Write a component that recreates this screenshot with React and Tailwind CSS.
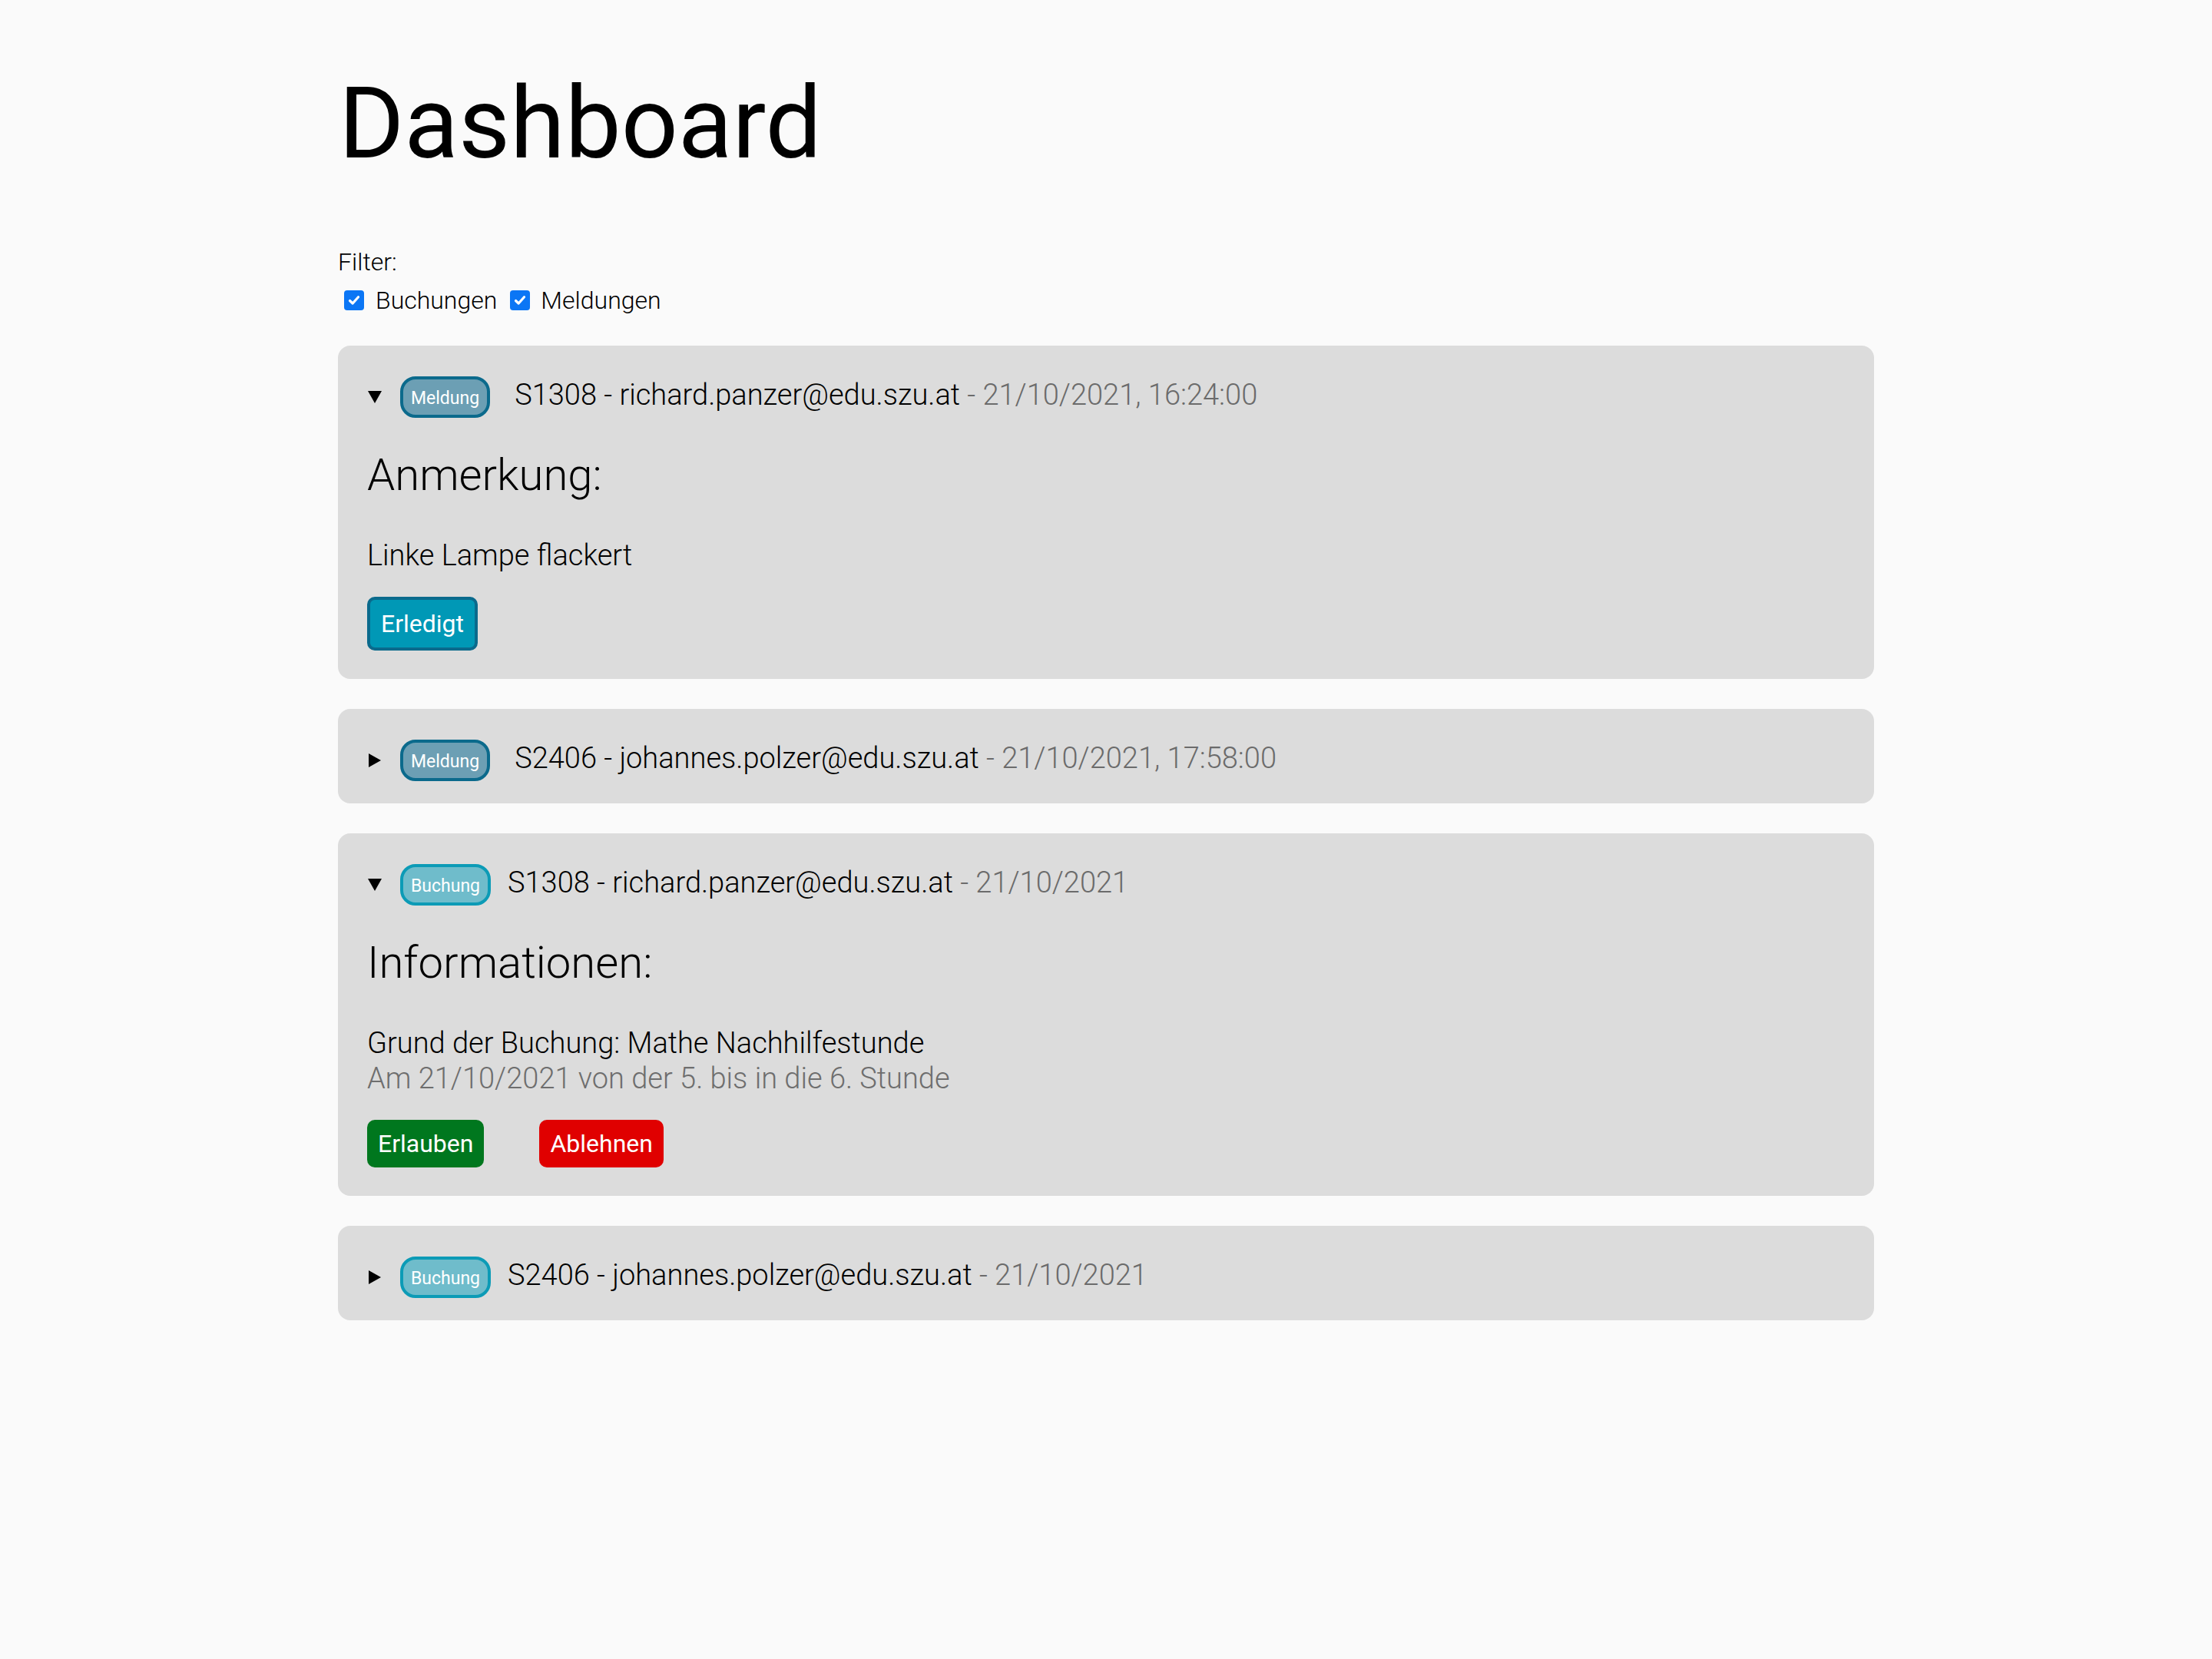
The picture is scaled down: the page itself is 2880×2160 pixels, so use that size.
import React from 'react';

const items = [
  {
    id: 1,
    type: 'Meldung',
    open: true,
    head: 'S1308 - richard.panzer@edu.szu.at',
    date: '21/10/2021, 16:24:00',
    title: 'Anmerkung:',
    lines: ['Linke Lampe flackert'],
    actions: 'meldung',
  },
  {
    id: 2,
    type: 'Meldung',
    open: false,
    head: 'S2406 - johannes.polzer@edu.szu.at',
    date: '21/10/2021, 17:58:00',
  },
  {
    id: 3,
    type: 'Buchung',
    open: true,
    head: 'S1308 - richard.panzer@edu.szu.at',
    date: '21/10/2021',
    title: 'Informationen:',
    lines: ['Grund der Buchung: Mathe Nachhilfestunde'],
    sub: 'Am 21/10/2021 von der 5. bis in die 6. Stunde',
    actions: 'buchung',
  },
  {
    id: 4,
    type: 'Buchung',
    open: false,
    head: 'S2406 - johannes.polzer@edu.szu.at',
    date: '21/10/2021',
  },
];

function Arrow({ open }) {
  // summary marker, drawn so the size matches
  return open ? (
    <svg width="18" height="16" viewBox="0 0 18 16" className="shrink-0">
      <path d="M0 0 H18 L9 16 Z" fill="#000" />
    </svg>
  ) : (
    <svg width="16" height="18" viewBox="0 0 16 18" className="shrink-0">
      <path d="M0 0 L16 9 L0 18 Z" fill="#000" />
    </svg>
  );
}

function Badge({ type }) {
  const cls =
    type === 'Meldung'
      ? 'bg-[#6c9fb4] border-[#0b6a8c]'
      : 'bg-[#6fbccb] border-[#0c9bb6]';
  return (
    <span
      className={`h-[54px] px-[10px] border-4 rounded-[20px] flex items-center text-white text-[23px] leading-[26px] pt-[3px] font-normal ${cls}`}
    >
      {type}
    </span>
  );
}

function CheckBox() {
  return (
    <span className="w-[26px] h-[26px] rounded-[4px] bg-[#0b76f5] flex items-center justify-center">
      <svg width="18" height="18" viewBox="0 0 18 18">
        <path d="M3.5 9.5 L7.2 13 L14.5 4.8" fill="none" stroke="#fff" strokeWidth="3.2" strokeLinecap="round" strokeLinejoin="round" />
      </svg>
    </span>
  );
}

function Card({ item }) {
  return (
    <div className={`bg-[#dcdcdc] rounded-[16px] pl-[38px] pr-[38px] pt-[40px] ${item.open ? 'pb-[37px]' : 'pb-[29px]'}`}>
      <div className="h-[54px] flex items-center">
        <span className="w-[18px] flex items-center justify-center ml-[1px]">
          <Arrow open={item.open} />
        </span>
        <span className="ml-[24px]">
          <Badge type={item.type} />
        </span>
        <span className={`${item.type === 'Meldung' ? 'ml-[32px]' : 'ml-[22px]'} pb-[6px] text-[38px] leading-[46px] font-light text-black`}>
          {item.head}
          <span className="text-[#6b6b6b]"> - {item.date}</span>
        </span>
      </div>

      {item.open && (
        <div>
          <h2 className="mt-[40px] text-[58px] leading-[68px] font-light text-black">{item.title}</h2>
          <div className="mt-[48px] text-[38px] leading-[46px] font-light">
            {item.lines.map((l) => (
              <p key={l} className="text-black">{l}</p>
            ))}
            {item.sub && <p className="text-[#6e6e6e]">{item.sub}</p>}
          </div>
          <div className="mt-[31px] flex items-start">
            {item.actions === 'meldung' ? (
              <button className="px-[14px] py-[12px] border-4 border-[#0a6a8c] bg-[#0098b6] rounded-[10px] text-white text-[32px] leading-[38px] font-normal">
                Erledigt
              </button>
            ) : (
              <>
                <button className="px-[14px] py-[12px] bg-[#00771e] rounded-[10px] text-white text-[32px] leading-[38px] font-normal">
                  Erlauben
                </button>
                <button className="ml-[72px] px-[14px] py-[12px] bg-[#e00000] rounded-[10px] text-white text-[32px] leading-[38px] font-normal">
                  Ablehnen
                </button>
              </>
            )}
          </div>
        </div>
      )}
    </div>
  );
}

export default function App() {
  return (
    <div className="min-h-screen bg-[#fafafa] font-['Roboto','Liberation_Sans',sans-serif] text-black">
      <div className="w-[2000px] mx-auto pt-[85px] pb-[100px]">
        <h1 className="text-[130px] leading-[152px] font-normal ml-[1px]">Dashboard</h1>

        <div className="mt-[85px] text-[32px] leading-[38px] font-light">Filter:</div>
        <div className="mt-[11px] h-[40px] flex items-center text-[32px] leading-[38px] font-light">
          <span className="ml-[8px]"><CheckBox /></span>
          <span className="ml-[15px]">Buchungen</span>
          <span className="ml-[17px]"><CheckBox /></span>
          <span className="ml-[14px]">Meldungen</span>
        </div>

        <div className="mt-[39px] flex flex-col gap-[39px]">
          {items.map((item) => (
            <Card key={item.id} item={item} />
          ))}
        </div>
      </div>
    </div>
  );
}
